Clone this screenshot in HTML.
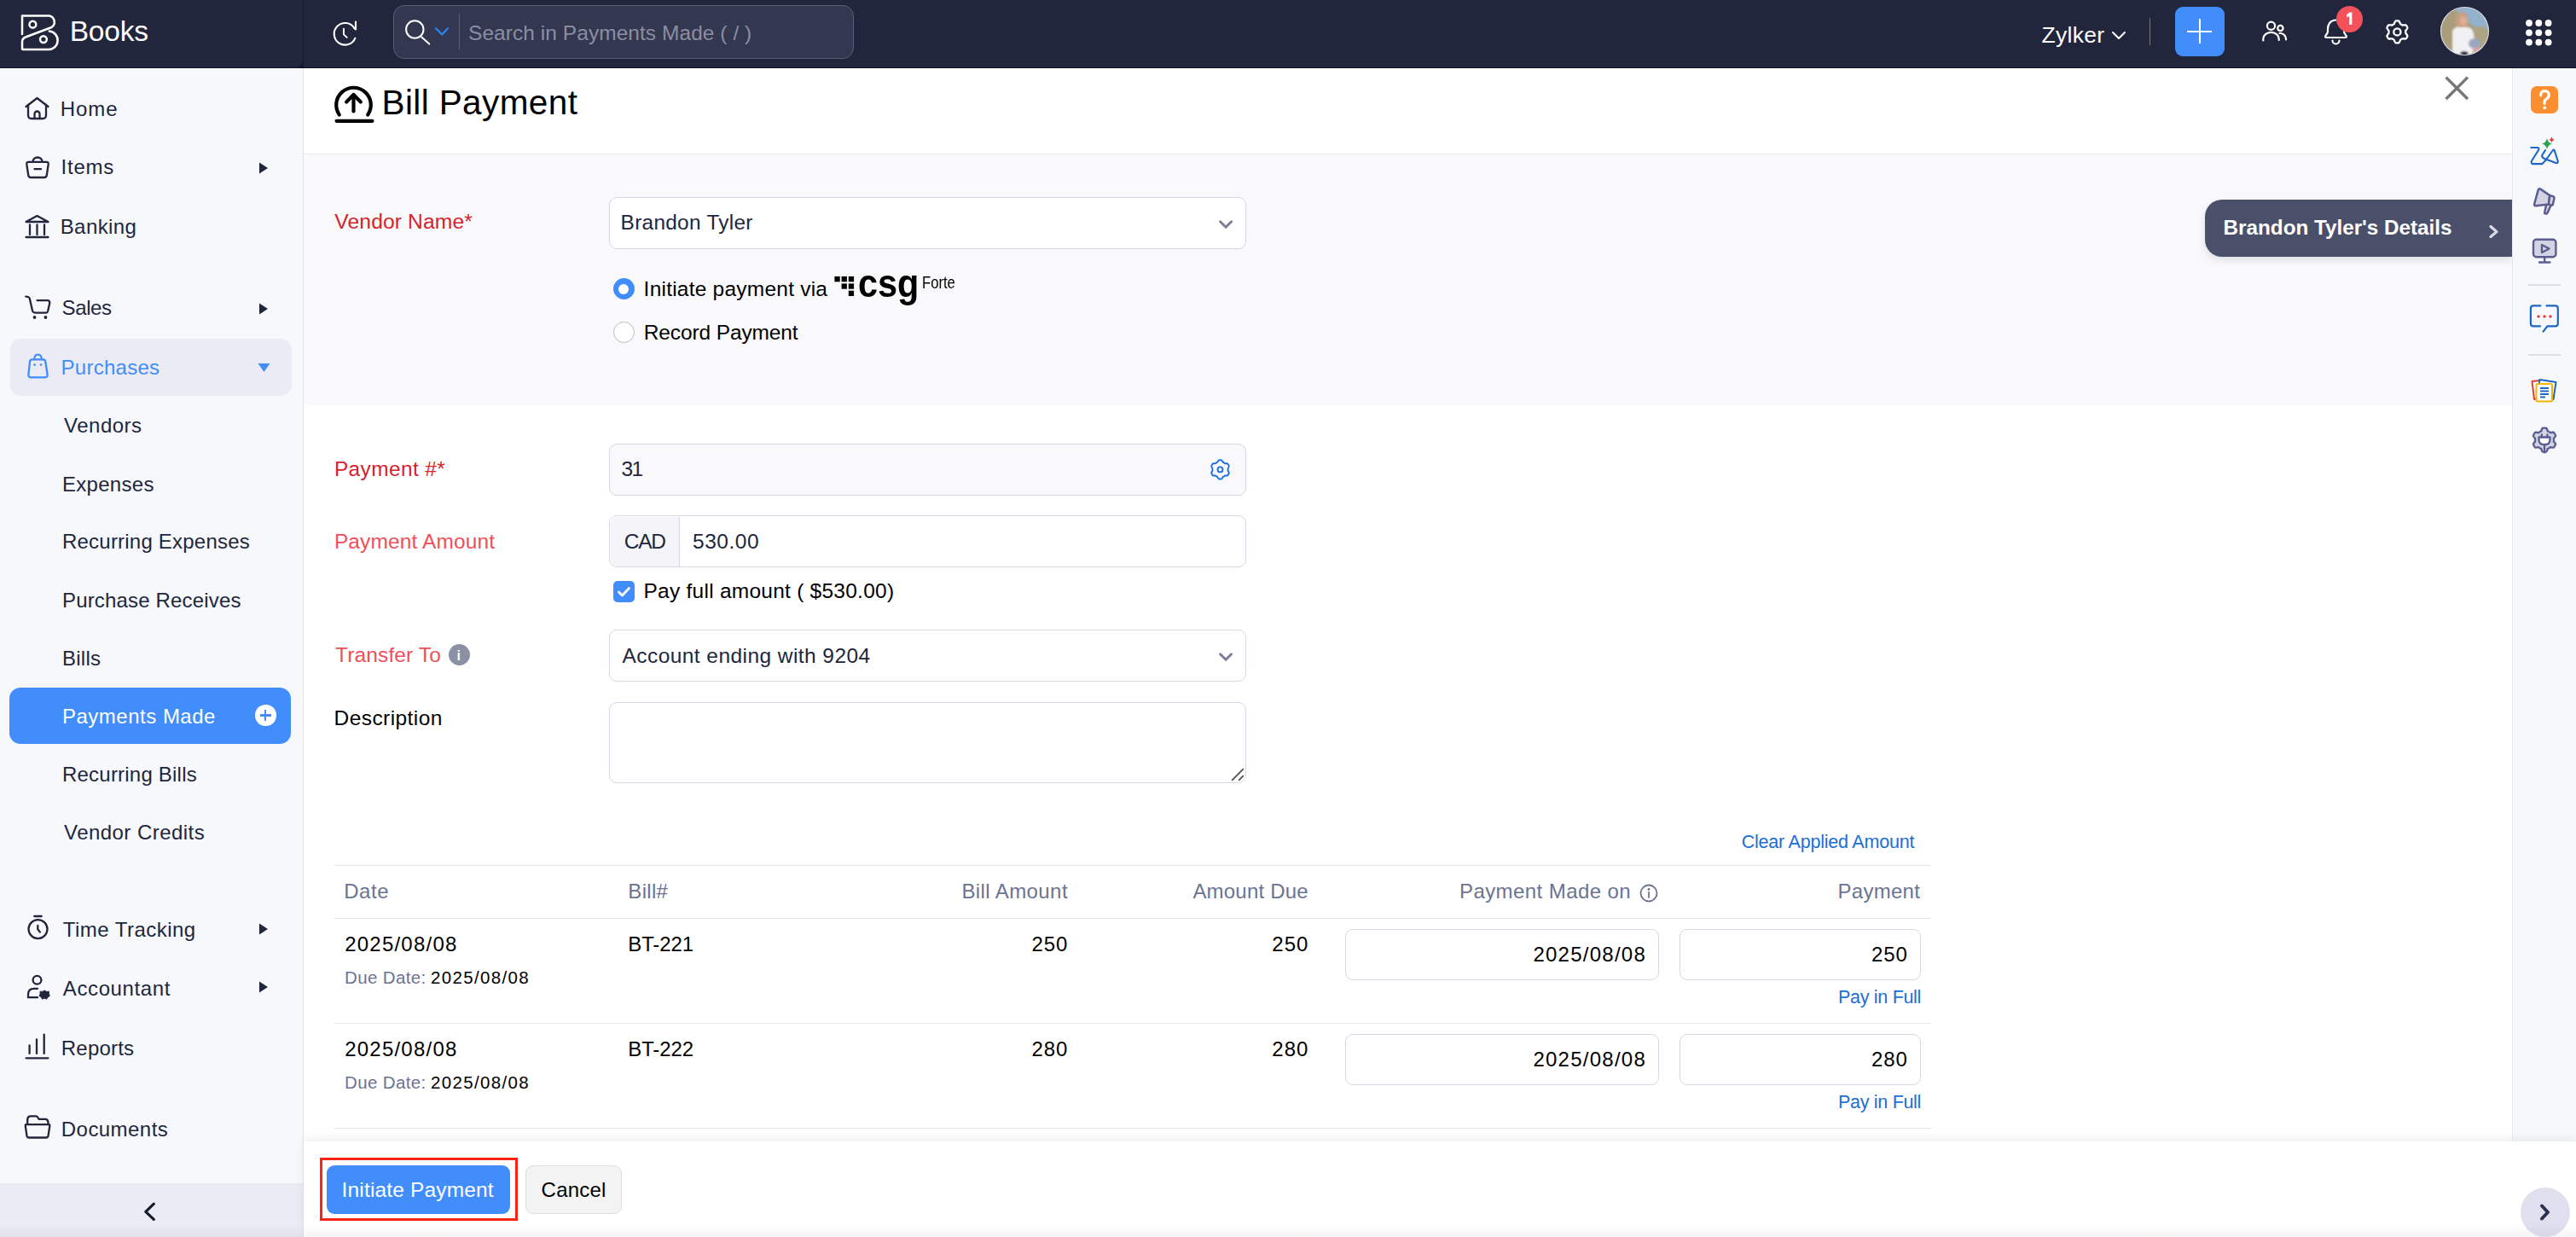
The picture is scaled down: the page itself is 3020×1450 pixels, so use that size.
<!DOCTYPE html>
<html><head><meta charset="utf-8"><title>Bill Payment</title>
<style>
html,body{margin:0;padding:0;}
body{width:3020px;height:1450px;position:relative;overflow:hidden;background:#fff;font-family:"Liberation Sans", sans-serif;}
.t{position:absolute;white-space:nowrap;line-height:1;}
svg{overflow:visible;}
</style></head><body>
<div style="position:absolute;left:0px;top:0px;width:3020px;height:80px;background:#21263c;"></div>
<div style="position:absolute;left:338px;top:0px;width:18px;height:80px;background:#171a2b;"></div>
<div style="position:absolute;left:0px;top:0px;width:354.5px;height:80px;background:#21263c;border-bottom-right-radius:10px;"></div>
<div style="position:absolute;left:0px;top:79px;width:3020px;height:1px;background:#0d1124;"></div>
<svg style="position:absolute;left:20px;top:12px;" width="52" height="52" viewBox="0 0 52 52" fill="none"><g stroke="#fff" stroke-width="2.5" stroke-linecap="round" stroke-linejoin="round"><path d="M6 28 V6.5 H38 A7.5 7.5 0 0 1 40.5 20 L10 31.5 Q6 33 6 37 V45.5 Q6 46 7 46 H36 A10.5 10.5 0 0 0 37.8 24.6"/><circle cx="18.4" cy="16.7" r="3.9"/><circle cx="30.9" cy="34.1" r="3.9"/></g></svg>
<div class="t" style="left:81.70px;top:20.00px;font-size:33.5px;color:#fff;font-weight:400;letter-spacing:-0.175px;">Books</div>
<svg style="position:absolute;left:388px;top:23px;" width="34" height="34" viewBox="0 0 34 34" fill="none"><g stroke="#fff" stroke-width="2.1" stroke-linecap="round" stroke-linejoin="round"><path d="M27.4 10 A12.8 12.8 0 1 0 28.3 21.8"/><path d="M29 2.5 V11.5 L27.4 10"/><path d="M15 10.6 V17.4 L18.7 20.9" stroke-width="1.9"/></g></svg>
<div style="position:absolute;left:461px;top:6px;width:540px;height:63px;background:#33374f;border:1px solid #5a5e78;border-radius:13px;box-sizing:border-box;"></div>
<svg style="position:absolute;left:472px;top:20px;" width="34" height="34" viewBox="0 0 34 34" fill="none"><g stroke="#fff" stroke-width="2" stroke-linecap="round"><circle cx="14.3" cy="14.5" r="10.2"/><path d="M22.3 23.5 L31.3 31.6"/></g></svg>
<svg style="position:absolute;left:508px;top:29px;" width="20" height="14" viewBox="0 0 20 14" fill="none"><path d="M3 4.3 L10.2 11.4 L17 4.3" stroke="#2f80f0" stroke-width="2.3" stroke-linecap="round" stroke-linejoin="round"/></svg>
<div style="position:absolute;left:538px;top:16px;width:1.2000000000000455px;height:42px;background:#5d6178;"></div>
<div class="t" style="left:549.00px;top:27.00px;font-size:24.5px;color:#8a8ea3;font-weight:400;letter-spacing:0.050px;">Search in Payments Made ( / )</div>
<div class="t" style="left:2393.60px;top:28.00px;font-size:26.5px;color:#fff;font-weight:400;letter-spacing:0.280px;">Zylker</div>
<svg style="position:absolute;left:2474px;top:34px;" width="20" height="14" viewBox="0 0 20 14" fill="none"><path d="M3 4 L10 11 L17 4" stroke="#fff" stroke-width="2" stroke-linecap="round" stroke-linejoin="round"/></svg>
<div style="position:absolute;left:2519.5px;top:21px;width:1.199999999999818px;height:32px;background:#77777a;"></div>
<div style="position:absolute;left:2550px;top:8px;width:58px;height:58px;background:#408dfb;border-radius:9px;"></div>
<div style="position:absolute;left:2564px;top:35.5px;width:29px;height:2.0px;background:#fff;"></div>
<div style="position:absolute;left:2577.5px;top:22px;width:2.0px;height:29px;background:#fff;"></div>
<svg style="position:absolute;left:2650px;top:22px;" width="34" height="30" viewBox="0 0 34 30" fill="none"><g stroke="#fff" stroke-width="2.2" stroke-linecap="round"><circle cx="12.5" cy="8.3" r="4.6"/><circle cx="23.4" cy="11" r="3.2"/><path d="M3.3 25.5 V23.5 A9 7.5 0 0 1 21.7 23.5 V25"/><path d="M22.5 17 A7 7 0 0 1 30 23.5 V24.5"/></g></svg>
<svg style="position:absolute;left:2722px;top:20px;" width="34" height="34" viewBox="0 0 34 34" fill="none"><g stroke="#fff" stroke-width="2.2" stroke-linecap="round" stroke-linejoin="round"><path d="M16.5 3.5 C10 3.5 7 8.5 7 14 V17 C7 19.5 4 21.5 4 23 C4 23.8 4.6 24 5.5 24 H27.5 C28.4 24 29 23.8 29 23 C29 21.5 26 19.5 26 17"/><path d="M12.5 27.5 A4 4 0 0 0 20.5 27.5"/></g></svg>
<div style="position:absolute;left:2739px;top:7px;width:31px;height:31px;border-radius:50%;background:#f5515b;"></div>
<svg style="position:absolute;left:2740px;top:10px;" width="30" height="30" viewBox="0 0 30 30" fill="none"><path d="M14.3 4.6 H17.4 V18.9 H14.3 V8.9 L11.1 10.4 V7.3 Z" fill="#fff"/></svg>
<svg style="position:absolute;left:2794px;top:21px;" width="34" height="34" viewBox="0 0 34 34" fill="none"><g stroke="#fff" stroke-width="2.3" stroke-linejoin="round"><path d="M26.30 16.40 L26.30 16.57 L26.29 16.75 L26.29 16.92 L26.28 17.09 L26.26 17.26 L26.25 17.43 L26.23 17.61 L26.30 17.79 L26.45 17.99 L26.61 18.20 L26.77 18.42 L26.94 18.64 L27.12 18.87 L27.29 19.12 L27.46 19.36 L27.62 19.62 L27.78 19.88 L27.93 20.15 L28.06 20.42 L28.18 20.69 L28.28 20.96 L28.36 21.23 L28.37 21.48 L28.28 21.69 L28.18 21.89 L28.08 22.10 L27.98 22.30 L27.88 22.50 L27.77 22.70 L27.66 22.90 L27.54 23.10 L27.42 23.29 L27.30 23.48 L27.18 23.67 L27.05 23.86 L26.92 24.04 L26.78 24.22 L26.57 24.34 L26.29 24.41 L26.00 24.46 L25.71 24.49 L25.41 24.51 L25.10 24.52 L24.80 24.51 L24.50 24.50 L24.20 24.47 L23.90 24.44 L23.61 24.41 L23.33 24.38 L23.06 24.34 L22.80 24.31 L22.56 24.28 L22.36 24.31 L22.22 24.41 L22.08 24.51 L21.94 24.61 L21.79 24.70 L21.65 24.80 L21.50 24.89 L21.35 24.97 L21.20 25.06 L21.05 25.14 L20.89 25.22 L20.74 25.30 L20.58 25.37 L20.43 25.44 L20.27 25.51 L20.15 25.67 L20.05 25.90 L19.95 26.14 L19.84 26.39 L19.73 26.65 L19.62 26.92 L19.49 27.19 L19.36 27.46 L19.22 27.73 L19.08 28.00 L18.92 28.26 L18.75 28.51 L18.58 28.74 L18.39 28.97 L18.20 29.18 L17.98 29.30 L17.76 29.33 L17.53 29.35 L17.31 29.37 L17.08 29.38 L16.85 29.39 L16.63 29.40 L16.40 29.40 L16.17 29.40 L15.95 29.39 L15.72 29.38 L15.49 29.37 L15.27 29.35 L15.04 29.33 L14.82 29.30 L14.60 29.18 L14.41 28.97 L14.22 28.74 L14.05 28.51 L13.88 28.26 L13.72 28.00 L13.58 27.73 L13.44 27.46 L13.31 27.19 L13.18 26.92 L13.07 26.65 L12.96 26.39 L12.85 26.14 L12.75 25.90 L12.65 25.67 L12.53 25.51 L12.37 25.44 L12.22 25.37 L12.06 25.30 L11.91 25.22 L11.75 25.14 L11.60 25.06 L11.45 24.97 L11.30 24.89 L11.15 24.80 L11.01 24.70 L10.86 24.61 L10.72 24.51 L10.58 24.41 L10.44 24.31 L10.24 24.28 L10.00 24.31 L9.74 24.34 L9.47 24.38 L9.19 24.41 L8.90 24.44 L8.60 24.47 L8.30 24.50 L8.00 24.51 L7.70 24.52 L7.39 24.51 L7.09 24.49 L6.80 24.46 L6.51 24.41 L6.23 24.34 L6.02 24.22 L5.88 24.04 L5.75 23.86 L5.62 23.67 L5.50 23.48 L5.38 23.29 L5.26 23.10 L5.14 22.90 L5.03 22.70 L4.92 22.50 L4.82 22.30 L4.72 22.10 L4.62 21.89 L4.52 21.69 L4.43 21.48 L4.44 21.23 L4.52 20.96 L4.62 20.69 L4.74 20.42 L4.87 20.15 L5.02 19.88 L5.18 19.62 L5.34 19.36 L5.51 19.12 L5.68 18.87 L5.86 18.64 L6.03 18.42 L6.19 18.20 L6.35 17.99 L6.50 17.79 L6.57 17.61 L6.55 17.43 L6.54 17.26 L6.52 17.09 L6.51 16.92 L6.51 16.75 L6.50 16.57 L6.50 16.40 L6.50 16.23 L6.51 16.05 L6.51 15.88 L6.52 15.71 L6.54 15.54 L6.55 15.37 L6.57 15.19 L6.50 15.01 L6.35 14.81 L6.19 14.60 L6.03 14.38 L5.86 14.16 L5.68 13.93 L5.51 13.68 L5.34 13.44 L5.18 13.18 L5.02 12.92 L4.87 12.65 L4.74 12.38 L4.62 12.11 L4.52 11.84 L4.44 11.57 L4.43 11.32 L4.52 11.11 L4.62 10.91 L4.72 10.70 L4.82 10.50 L4.92 10.30 L5.03 10.10 L5.14 9.90 L5.26 9.70 L5.38 9.51 L5.50 9.32 L5.62 9.13 L5.75 8.94 L5.88 8.76 L6.02 8.58 L6.23 8.46 L6.51 8.39 L6.80 8.34 L7.09 8.31 L7.39 8.29 L7.70 8.28 L8.00 8.29 L8.30 8.30 L8.60 8.33 L8.90 8.36 L9.19 8.39 L9.47 8.42 L9.74 8.46 L10.00 8.49 L10.24 8.52 L10.44 8.49 L10.58 8.39 L10.72 8.29 L10.86 8.19 L11.01 8.10 L11.15 8.00 L11.30 7.91 L11.45 7.83 L11.60 7.74 L11.75 7.66 L11.91 7.58 L12.06 7.50 L12.22 7.43 L12.37 7.36 L12.53 7.29 L12.65 7.13 L12.75 6.90 L12.85 6.66 L12.96 6.41 L13.07 6.15 L13.18 5.88 L13.31 5.61 L13.44 5.34 L13.58 5.07 L13.72 4.80 L13.88 4.54 L14.05 4.29 L14.22 4.06 L14.41 3.83 L14.60 3.62 L14.82 3.50 L15.04 3.47 L15.27 3.45 L15.49 3.43 L15.72 3.42 L15.95 3.41 L16.17 3.40 L16.40 3.40 L16.63 3.40 L16.85 3.41 L17.08 3.42 L17.31 3.43 L17.53 3.45 L17.76 3.47 L17.98 3.50 L18.20 3.62 L18.39 3.83 L18.58 4.06 L18.75 4.29 L18.92 4.54 L19.08 4.80 L19.22 5.07 L19.36 5.34 L19.49 5.61 L19.62 5.88 L19.73 6.15 L19.84 6.41 L19.95 6.66 L20.05 6.90 L20.15 7.13 L20.27 7.29 L20.43 7.36 L20.58 7.43 L20.74 7.50 L20.89 7.58 L21.05 7.66 L21.20 7.74 L21.35 7.83 L21.50 7.91 L21.65 8.00 L21.79 8.10 L21.94 8.19 L22.08 8.29 L22.22 8.39 L22.36 8.49 L22.56 8.52 L22.80 8.49 L23.06 8.46 L23.33 8.42 L23.61 8.39 L23.90 8.36 L24.20 8.33 L24.50 8.30 L24.80 8.29 L25.10 8.28 L25.41 8.29 L25.71 8.31 L26.00 8.34 L26.29 8.39 L26.57 8.46 L26.78 8.58 L26.92 8.76 L27.05 8.94 L27.18 9.13 L27.30 9.32 L27.42 9.51 L27.54 9.70 L27.66 9.90 L27.77 10.10 L27.88 10.30 L27.98 10.50 L28.08 10.70 L28.18 10.91 L28.28 11.11 L28.37 11.32 L28.36 11.57 L28.28 11.84 L28.18 12.11 L28.06 12.38 L27.93 12.65 L27.78 12.92 L27.62 13.18 L27.46 13.44 L27.29 13.68 L27.12 13.93 L26.94 14.16 L26.77 14.38 L26.61 14.60 L26.45 14.81 L26.30 15.01 L26.23 15.19 L26.25 15.37 L26.26 15.54 L26.28 15.71 L26.29 15.88 L26.29 16.05 L26.30 16.23 Z"/><circle cx="16.4" cy="16.4" r="4.1"/></g></svg>
<svg style="position:absolute;left:2861px;top:8px;" width="57" height="57" viewBox="0 0 57 57" fill="none"><defs><clipPath id="avc"><circle cx="28.5" cy="28.5" r="28"/></clipPath><filter id="avb"><feGaussianBlur stdDeviation="1.3"/></filter></defs><g clip-path="url(#avc)"><rect width="57" height="57" fill="#a99d7c"/><g filter="url(#avb)"><path d="M16 0 H57 V30 Q50 22 40 24 Q33 18 22 10 Z" fill="#93b2cb"/><path d="M40 24 Q50 20 57 28 V57 H40 Z" fill="#aea383"/><ellipse cx="25.5" cy="18" rx="7.5" ry="12" fill="#c99f80"/><ellipse cx="27" cy="16.5" rx="4.2" ry="5" fill="#dcae98"/><path d="M14 28 Q18 22 24 24 L32 24 Q38 24 39 32 L41 44 Q41 54 34 57 H14 Z" fill="#f1f0f3"/><ellipse cx="40" cy="43" rx="7" ry="6" fill="#9aa7c2"/><ellipse cx="43" cy="51" rx="5.5" ry="3.5" fill="#d9a4a0"/><ellipse cx="28" cy="55" rx="5" ry="3" fill="#2b2b2b"/></g></g><circle cx="28.5" cy="28.5" r="28" stroke="#d8d8e0" stroke-width="1.2" fill="none"/></svg>
<svg style="position:absolute;left:2961px;top:23px;" width="30" height="30" viewBox="0 0 30 30" fill="none"><circle cx="4.0" cy="4.0" r="3.9" fill="#fff"/><circle cx="15.3" cy="4.0" r="3.9" fill="#fff"/><circle cx="26.6" cy="4.0" r="3.9" fill="#fff"/><circle cx="4.0" cy="15.3" r="3.9" fill="#fff"/><circle cx="15.3" cy="15.3" r="3.9" fill="#fff"/><circle cx="26.6" cy="15.3" r="3.9" fill="#fff"/><circle cx="4.0" cy="26.6" r="3.9" fill="#fff"/><circle cx="15.3" cy="26.6" r="3.9" fill="#fff"/><circle cx="26.6" cy="26.6" r="3.9" fill="#fff"/></svg>
<div style="position:absolute;left:0px;top:80px;width:355px;height:1370px;background:#f7f8fc;"></div>
<div style="position:absolute;left:0px;top:80px;width:356px;height:1px;background:#ffffff;"></div>
<div style="position:absolute;left:355px;top:80px;width:1px;height:1370px;background:#e3e4ea;"></div>
<div style="position:absolute;left:12px;top:397px;width:330px;height:67px;background:#ebebf5;border-radius:13px;"></div>
<div style="position:absolute;left:11px;top:806px;width:330px;height:66px;background:#408dfb;border-radius:13px;"></div>
<div class="t" style="left:70.70px;top:116.00px;font-size:24px;color:#21263c;font-weight:400;letter-spacing:0.967px;">Home</div>
<div class="t" style="left:71.60px;top:184.00px;font-size:24px;color:#21263c;font-weight:400;letter-spacing:0.750px;">Items</div>
<div class="t" style="left:70.70px;top:254.00px;font-size:24px;color:#21263c;font-weight:400;letter-spacing:0.417px;">Banking</div>
<div class="t" style="left:72.60px;top:349.00px;font-size:24px;color:#21263c;font-weight:400;letter-spacing:-0.400px;">Sales</div>
<div class="t" style="left:71.60px;top:419.00px;font-size:24px;color:#408dfb;font-weight:400;letter-spacing:0.262px;">Purchases</div>
<div class="t" style="left:75.00px;top:487.00px;font-size:24px;color:#21263c;font-weight:400;letter-spacing:0.500px;">Vendors</div>
<div class="t" style="left:73.00px;top:556.00px;font-size:24px;color:#21263c;font-weight:400;letter-spacing:0.286px;">Expenses</div>
<div class="t" style="left:73.00px;top:623.00px;font-size:24px;color:#21263c;font-weight:400;letter-spacing:0.212px;">Recurring Expenses</div>
<div class="t" style="left:73.00px;top:692.00px;font-size:24px;color:#21263c;font-weight:400;letter-spacing:0.169px;">Purchase Receives</div>
<div class="t" style="left:73.00px;top:760.00px;font-size:24px;color:#21263c;font-weight:400;letter-spacing:0.250px;">Bills</div>
<div class="t" style="left:73.00px;top:828.00px;font-size:24px;color:#fff;font-weight:400;letter-spacing:0.500px;">Payments Made</div>
<div class="t" style="left:73.00px;top:896.00px;font-size:24px;color:#21263c;font-weight:400;letter-spacing:0.214px;">Recurring Bills</div>
<div class="t" style="left:75.00px;top:964.00px;font-size:24px;color:#21263c;font-weight:400;letter-spacing:0.454px;">Vendor Credits</div>
<div class="t" style="left:73.80px;top:1078.00px;font-size:24px;color:#21263c;font-weight:400;letter-spacing:0.467px;">Time Tracking</div>
<div class="t" style="left:73.80px;top:1147.00px;font-size:24px;color:#21263c;font-weight:400;letter-spacing:0.611px;">Accountant</div>
<div class="t" style="left:71.80px;top:1217.00px;font-size:24px;color:#21263c;font-weight:400;letter-spacing:0.200px;">Reports</div>
<div class="t" style="left:71.80px;top:1312.00px;font-size:24px;color:#21263c;font-weight:400;letter-spacing:0.450px;">Documents</div>
<svg style="position:absolute;left:303px;top:190.2px;" width="12" height="14" viewBox="0 0 12 14" fill="none"><path d="M1 0.5 L11 7 L1 13.5 Z" fill="#21263c"/></svg>
<svg style="position:absolute;left:303px;top:355px;" width="12" height="14" viewBox="0 0 12 14" fill="none"><path d="M1 0.5 L11 7 L1 13.5 Z" fill="#21263c"/></svg>
<svg style="position:absolute;left:303px;top:1082px;" width="12" height="14" viewBox="0 0 12 14" fill="none"><path d="M1 0.5 L11 7 L1 13.5 Z" fill="#21263c"/></svg>
<svg style="position:absolute;left:303px;top:1150.3px;" width="12" height="14" viewBox="0 0 12 14" fill="none"><path d="M1 0.5 L11 7 L1 13.5 Z" fill="#21263c"/></svg>
<svg style="position:absolute;left:302px;top:425px;" width="15" height="12" viewBox="0 0 15 12" fill="none"><path d="M0.5 1 H14.5 L7.5 11 Z" fill="#408dfb"/></svg>
<div style="position:absolute;left:299px;top:826px;width:24.5px;height:24.5px;border-radius:50%;background:#fff;"></div>
<div style="position:absolute;left:304.8px;top:837.4px;width:13.0px;height:2.2000000000000455px;background:#408dfb;"></div>
<div style="position:absolute;left:310.2px;top:832px;width:2.1999999999999886px;height:13px;background:#408dfb;"></div>
<svg style="position:absolute;left:28px;top:112px;" width="32" height="30" viewBox="0 0 32 30" fill="none"><g stroke="#21263c" stroke-width="2.3" stroke-linecap="round" stroke-linejoin="round"><path d="M2.5 13 L15.5 3 L28.5 13"/><path d="M5 11 V23 Q5 27 9 27 H22 Q26 27 26 23 V11"/><path d="M12.5 27 V21.5 A3 3 0 0 1 18.5 21.5 V27"/></g></svg>
<svg style="position:absolute;left:28px;top:180px;" width="32" height="30" viewBox="0 0 32 30" fill="none"><g stroke="#21263c" stroke-width="2.3" stroke-linecap="round" stroke-linejoin="round"><path d="M10.5 9.5 A5.5 5 0 0 1 21.5 9.5"/><path d="M5.5 9.8 H26.5 Q29 9.8 28.7 12.5 L26.8 25.5 Q26.4 28 23.8 28 H8.2 Q5.6 28 5.2 25.5 L3.3 12.5 Q3 9.8 5.5 9.8 Z"/><path d="M12.5 18.2 H20"/></g></svg>
<svg style="position:absolute;left:28px;top:250px;" width="32" height="30" viewBox="0 0 32 30" fill="none"><g stroke="#21263c" stroke-width="2.3" stroke-linecap="round" stroke-linejoin="round"><path d="M2.5 10 L15.5 3 L28.5 10 Z"/><path d="M7 13.5 V25 M15.5 13.5 V25 M24 13.5 V25"/><path d="M2.5 28 H28.5"/></g></svg>
<svg style="position:absolute;left:28px;top:345px;" width="34" height="32" viewBox="0 0 34 32" fill="none"><g stroke="#21263c" stroke-width="2.3" stroke-linecap="round" stroke-linejoin="round"><path d="M2.2 2.6 Q5.5 2.6 6.7 4.5 L10.2 19.9 Q11 21.7 13.4 21.7 H25.8 Q27.5 21.7 28 20 L30.2 10.5 Q30.5 7.5 28 7.2 H15.6"/></g><circle cx="12.5" cy="27" r="1.9" fill="#21263c"/><circle cx="25.4" cy="27" r="1.9" fill="#21263c"/></svg>
<svg style="position:absolute;left:30px;top:414px;" width="30" height="32" viewBox="0 0 30 32" fill="none"><g stroke="#408dfb" stroke-width="2.3" stroke-linecap="round" stroke-linejoin="round"><path d="M10 7.3 Q10.5 1.6 14.5 1.6 Q18.5 1.6 19 7.3"/><path d="M7.5 7.4 H20.5 Q23 7.4 23.3 10 L25.6 25 Q26 28.3 22.7 28.3 H6.3 Q3 28.3 3.4 25 L5 10 Q5.3 7.4 7.5 7.4 Z"/></g><circle cx="10.6" cy="13.6" r="1.3" fill="#408dfb"/><circle cx="18" cy="13.6" r="1.3" fill="#408dfb"/></svg>
<svg style="position:absolute;left:29px;top:1070px;" width="32" height="34" viewBox="0 0 32 34" fill="none"><g stroke="#21263c" stroke-width="2.3" stroke-linecap="round" stroke-linejoin="round"><circle cx="15.5" cy="19.1" r="11"/><path d="M11.2 4 H19.7"/><path d="M15.3 14.9 V19.3 L17.9 22.6"/></g></svg>
<svg style="position:absolute;left:29px;top:1140px;" width="32" height="34" viewBox="0 0 32 34" fill="none"><g stroke="#21263c" stroke-width="2.3" stroke-linecap="round" stroke-linejoin="round"><circle cx="14.5" cy="8.7" r="4.9"/><path d="M15 18.8 H11 Q4 18.8 4 25.5 V29.2 H15"/></g><path d="M23.2 21 L25.6 22.4 L28.4 22.2 L28.2 25 L29.4 27.4 L27 28.8 L25.6 31.2 L23.2 30 L20.6 31.2 L19.4 28.8 L17 27.4 L18.2 25 L18 22.2 L20.8 22.4 Z" fill="#21263c" stroke="#21263c" stroke-width="1" stroke-linejoin="round"/></svg>
<svg style="position:absolute;left:29px;top:1210px;" width="32" height="34" viewBox="0 0 32 34" fill="none"><g stroke="#21263c" stroke-width="2.3" stroke-linecap="round" stroke-linejoin="round"><path d="M5.6 24.9 V15.5 M14 24.9 V8.5 M22.7 24.9 V2.6"/><path d="M1.6 30.3 H27.4"/></g></svg>
<svg style="position:absolute;left:28px;top:1303px;" width="32" height="34" viewBox="0 0 32 34" fill="none"><g stroke="#21263c" stroke-width="2.3" stroke-linecap="round" stroke-linejoin="round"><path d="M4.2 15 V9 Q4.5 5.4 8 5.4 H14 Q15.5 5.4 16.5 7 L17.5 8.8 H25 Q28 8.8 28.4 12 V15"/><path d="M2.5 15.2 H29.6 Q30.6 15.2 30.3 17 L28.5 28.5 Q28 30.5 26 30.5 H6 Q4 30.5 3.5 28.5 L1.8 17 Q1.5 15.2 2.5 15.2 Z"/></g></svg>
<div style="position:absolute;left:0px;top:1387px;width:355px;height:63px;background:#ebebf4;"></div>
<svg style="position:absolute;left:164px;top:1405px;" width="22" height="30" viewBox="0 0 22 30" fill="none"><path d="M16.3 6.2 L6.8 15.3 L16.3 24.4" stroke="#161a2e" stroke-width="3.2" stroke-linecap="round" stroke-linejoin="round"/></svg>
<div style="position:absolute;left:356px;top:81px;width:2589px;height:99px;background:#fff;"></div>
<div style="position:absolute;left:356px;top:180px;width:2589px;height:1px;background:#ebebef;"></div>
<div style="position:absolute;left:356px;top:181px;width:2589px;height:294px;background:#f9f9fb;"></div>
<svg style="position:absolute;left:390px;top:97px;" width="50" height="50" viewBox="0 0 50 50" fill="none"><g stroke="#000" stroke-width="4.2" stroke-linecap="round" stroke-linejoin="round"><path d="M7.8 37.6 A20.3 20.3 0 1 1 41.2 37.6"/><path d="M24.5 33.5 V14.2"/><path d="M16.2 22.4 L24.5 14 L32.8 22.4"/><path d="M4.6 44.8 H46.4"/></g></svg>
<div class="t" style="left:447.50px;top:100.00px;font-size:40.5px;color:#000;font-weight:400;letter-spacing:0.391px;">Bill Payment</div>
<svg style="position:absolute;left:2862px;top:85px;" width="38" height="38" viewBox="0 0 38 38" fill="none"><g stroke="#767676" stroke-width="3.4" stroke-linecap="butt"><path d="M5.6 5.6 L31 31 M31 5.6 L5.6 31"/></g></svg>
<div style="position:absolute;left:2585px;top:234px;width:360px;height:67px;background:#4b506a;border-radius:20px 0 0 20px;box-shadow:0 4px 9px rgba(0,0,0,0.10);"></div>
<div class="t" style="left:2606.60px;top:255.00px;font-size:24.3px;color:#fff;font-weight:700;letter-spacing:-0.032px;">Brandon Tyler's Details</div>
<svg style="position:absolute;left:2913px;top:260px;" width="22" height="22" viewBox="0 0 22 22" fill="none"><path d="M7 5.5 L14 11.6 L7 17.5" stroke="#dcdde6" stroke-width="3.2" stroke-linecap="round" stroke-linejoin="round"/></svg>
<div class="t" style="left:392.30px;top:248.00px;font-size:24.7px;color:#d5232d;font-weight:400;letter-spacing:0.091px;">Vendor Name*</div>
<div style="position:absolute;left:714px;top:231px;width:747px;height:61px;background:#fff;border:1.5px solid #d6d8e3;border-radius:9px;box-sizing:border-box;"></div>
<div class="t" style="left:727.60px;top:249.00px;font-size:24.4px;color:#21263c;font-weight:400;letter-spacing:0.283px;">Brandon Tyler</div>
<svg style="position:absolute;left:1428px;top:254px;" width="18" height="16" viewBox="0 0 18 16" fill="none"><path d="M2.6 5.8 L9.1 12.3 L15.6 5.8" stroke="#7b7e95" stroke-width="3" stroke-linecap="round" stroke-linejoin="round"/></svg>
<div style="position:absolute;left:718.5px;top:326px;width:25px;height:25px;border-radius:50%;background:#408dfb;"></div>
<div style="position:absolute;left:725.4px;top:332.5px;width:12px;height:12px;border-radius:50%;background:#fff;"></div>
<div class="t" style="left:754.60px;top:327.00px;font-size:24.5px;color:#000;font-weight:400;letter-spacing:0.226px;">Initiate payment via</div>
<div style="position:absolute;left:718.5px;top:376.8px;width:25px;height:25px;border-radius:50%;background:#fff;border:1.2px solid #bdbdc2;box-sizing:border-box;"></div>
<div class="t" style="left:754.70px;top:378.00px;font-size:24.5px;color:#000;font-weight:400;letter-spacing:-0.115px;">Record Payment</div>
<svg style="position:absolute;left:975px;top:320px;" width="30" height="30" viewBox="0 0 30 30" fill="none"><rect x="3.4" y="4.0" width="6.3" height="6.3" fill="#000"/><rect x="11.6" y="4.0" width="6.3" height="6.3" fill="#000"/><rect x="19.8" y="4.0" width="6.3" height="6.3" fill="#000"/><rect x="11.6" y="12.4" width="6.3" height="6.3" fill="#000"/><rect x="19.8" y="12.4" width="6.3" height="6.3" fill="#000"/><rect x="19.8" y="20.7" width="6.3" height="6.3" fill="#000"/></svg>
<div class="t" style="left:1006.40px;top:309.00px;font-size:46px;color:#000;font-weight:700;transform:scaleX(0.9);transform-origin:0 0;">csg</div>
<div class="t" style="left:1081.10px;top:321.00px;font-size:20.8px;color:#000;font-weight:400;transform:scaleX(0.8);transform-origin:0 0;">Forte</div>
<div class="t" style="left:391.90px;top:538.00px;font-size:24.5px;color:#d5232d;font-weight:400;letter-spacing:0.356px;">Payment #*</div>
<div style="position:absolute;left:714px;top:520px;width:747px;height:61px;background:#f9f9fb;border:1.5px solid #d6d8e3;border-radius:9px;box-sizing:border-box;"></div>
<div class="t" style="left:728.60px;top:538.00px;font-size:24.5px;color:#21263c;font-weight:400;letter-spacing:-1.600px;">31</div>
<svg style="position:absolute;left:1416px;top:536px;" width="30" height="30" viewBox="0 0 30 30" fill="none"><g stroke="#1a6fe0" stroke-width="1.9" stroke-linejoin="round"><path d="M23.60 14.40 L23.60 14.56 L23.59 14.72 L23.59 14.88 L23.58 15.03 L23.57 15.19 L23.55 15.35 L23.53 15.51 L23.51 15.67 L23.55 15.83 L23.66 16.01 L23.78 16.20 L23.90 16.40 L24.02 16.60 L24.14 16.80 L24.26 17.01 L24.37 17.23 L24.48 17.45 L24.58 17.67 L24.67 17.90 L24.74 18.13 L24.81 18.36 L24.79 18.56 L24.72 18.74 L24.64 18.91 L24.56 19.09 L24.48 19.27 L24.39 19.44 L24.30 19.61 L24.21 19.78 L24.11 19.95 L24.01 20.12 L23.91 20.28 L23.81 20.45 L23.70 20.61 L23.59 20.77 L23.48 20.92 L23.36 21.08 L23.25 21.23 L23.08 21.35 L22.85 21.41 L22.61 21.45 L22.37 21.49 L22.13 21.52 L21.89 21.53 L21.64 21.54 L21.40 21.55 L21.16 21.54 L20.93 21.54 L20.70 21.53 L20.48 21.52 L20.26 21.52 L20.10 21.57 L19.98 21.67 L19.85 21.76 L19.72 21.85 L19.59 21.94 L19.46 22.03 L19.32 22.12 L19.19 22.20 L19.05 22.28 L18.91 22.36 L18.77 22.43 L18.63 22.51 L18.49 22.58 L18.35 22.65 L18.20 22.71 L18.06 22.78 L17.91 22.84 L17.78 22.95 L17.68 23.14 L17.58 23.33 L17.47 23.54 L17.36 23.74 L17.24 23.95 L17.11 24.16 L16.98 24.36 L16.85 24.57 L16.70 24.76 L16.55 24.95 L16.39 25.13 L16.23 25.30 L16.04 25.39 L15.85 25.42 L15.66 25.44 L15.47 25.46 L15.27 25.47 L15.08 25.48 L14.89 25.49 L14.69 25.50 L14.50 25.50 L14.31 25.50 L14.11 25.49 L13.92 25.48 L13.73 25.47 L13.53 25.46 L13.34 25.44 L13.15 25.42 L12.96 25.39 L12.77 25.30 L12.61 25.13 L12.45 24.95 L12.30 24.76 L12.15 24.57 L12.02 24.36 L11.89 24.16 L11.76 23.95 L11.64 23.74 L11.53 23.54 L11.42 23.33 L11.32 23.14 L11.22 22.95 L11.09 22.84 L10.94 22.78 L10.80 22.71 L10.65 22.65 L10.51 22.58 L10.37 22.51 L10.23 22.43 L10.09 22.36 L9.95 22.28 L9.81 22.20 L9.68 22.12 L9.54 22.03 L9.41 21.94 L9.28 21.85 L9.15 21.76 L9.02 21.67 L8.90 21.57 L8.74 21.52 L8.52 21.52 L8.30 21.53 L8.07 21.54 L7.84 21.54 L7.60 21.55 L7.36 21.54 L7.11 21.53 L6.87 21.52 L6.63 21.49 L6.39 21.45 L6.15 21.41 L5.92 21.35 L5.75 21.23 L5.64 21.08 L5.52 20.92 L5.41 20.77 L5.30 20.61 L5.19 20.45 L5.09 20.28 L4.99 20.12 L4.89 19.95 L4.79 19.78 L4.70 19.61 L4.61 19.44 L4.52 19.27 L4.44 19.09 L4.36 18.91 L4.28 18.74 L4.21 18.56 L4.19 18.36 L4.26 18.13 L4.33 17.90 L4.42 17.67 L4.52 17.45 L4.63 17.23 L4.74 17.01 L4.86 16.80 L4.98 16.60 L5.10 16.40 L5.22 16.20 L5.34 16.01 L5.45 15.83 L5.49 15.67 L5.47 15.51 L5.45 15.35 L5.43 15.19 L5.42 15.03 L5.41 14.88 L5.41 14.72 L5.40 14.56 L5.40 14.40 L5.40 14.24 L5.41 14.08 L5.41 13.92 L5.42 13.77 L5.43 13.61 L5.45 13.45 L5.47 13.29 L5.49 13.13 L5.45 12.97 L5.34 12.79 L5.22 12.60 L5.10 12.40 L4.98 12.20 L4.86 12.00 L4.74 11.79 L4.63 11.57 L4.52 11.35 L4.42 11.13 L4.33 10.90 L4.26 10.67 L4.19 10.44 L4.21 10.24 L4.28 10.06 L4.36 9.89 L4.44 9.71 L4.52 9.53 L4.61 9.36 L4.70 9.19 L4.79 9.02 L4.89 8.85 L4.99 8.68 L5.09 8.52 L5.19 8.35 L5.30 8.19 L5.41 8.03 L5.52 7.88 L5.64 7.72 L5.75 7.57 L5.92 7.45 L6.15 7.39 L6.39 7.35 L6.63 7.31 L6.87 7.28 L7.11 7.27 L7.36 7.26 L7.60 7.25 L7.84 7.26 L8.07 7.26 L8.30 7.27 L8.52 7.28 L8.74 7.28 L8.90 7.23 L9.02 7.13 L9.15 7.04 L9.28 6.95 L9.41 6.86 L9.54 6.77 L9.68 6.68 L9.81 6.60 L9.95 6.52 L10.09 6.44 L10.23 6.37 L10.37 6.29 L10.51 6.22 L10.65 6.15 L10.80 6.09 L10.94 6.02 L11.09 5.96 L11.22 5.85 L11.32 5.66 L11.42 5.47 L11.53 5.26 L11.64 5.06 L11.76 4.85 L11.89 4.64 L12.02 4.44 L12.15 4.23 L12.30 4.04 L12.45 3.85 L12.61 3.67 L12.77 3.50 L12.96 3.41 L13.15 3.38 L13.34 3.36 L13.53 3.34 L13.73 3.33 L13.92 3.32 L14.11 3.31 L14.31 3.30 L14.50 3.30 L14.69 3.30 L14.89 3.31 L15.08 3.32 L15.27 3.33 L15.47 3.34 L15.66 3.36 L15.85 3.38 L16.04 3.41 L16.23 3.50 L16.39 3.67 L16.55 3.85 L16.70 4.04 L16.85 4.23 L16.98 4.44 L17.11 4.64 L17.24 4.85 L17.36 5.06 L17.47 5.26 L17.58 5.47 L17.68 5.66 L17.78 5.85 L17.91 5.96 L18.06 6.02 L18.20 6.09 L18.35 6.15 L18.49 6.22 L18.63 6.29 L18.77 6.37 L18.91 6.44 L19.05 6.52 L19.19 6.60 L19.32 6.68 L19.46 6.77 L19.59 6.86 L19.72 6.95 L19.85 7.04 L19.98 7.13 L20.10 7.23 L20.26 7.28 L20.48 7.28 L20.70 7.27 L20.93 7.26 L21.16 7.26 L21.40 7.25 L21.64 7.26 L21.89 7.27 L22.13 7.28 L22.37 7.31 L22.61 7.35 L22.85 7.39 L23.08 7.45 L23.25 7.57 L23.36 7.72 L23.48 7.88 L23.59 8.03 L23.70 8.19 L23.81 8.35 L23.91 8.52 L24.01 8.68 L24.11 8.85 L24.21 9.02 L24.30 9.19 L24.39 9.36 L24.48 9.53 L24.56 9.71 L24.64 9.89 L24.72 10.06 L24.79 10.24 L24.81 10.44 L24.74 10.67 L24.67 10.90 L24.58 11.13 L24.48 11.35 L24.37 11.57 L24.26 11.79 L24.14 12.00 L24.02 12.20 L23.90 12.40 L23.78 12.60 L23.66 12.79 L23.55 12.97 L23.51 13.13 L23.53 13.29 L23.55 13.45 L23.57 13.61 L23.58 13.77 L23.59 13.92 L23.59 14.08 L23.60 14.24 Z"/><circle cx="14.5" cy="14.4" r="3"/></g></svg>
<div class="t" style="left:391.90px;top:623.00px;font-size:24.5px;color:#ef4f5a;font-weight:400;letter-spacing:0.123px;">Payment Amount</div>
<div style="position:absolute;left:714px;top:604px;width:747px;height:61px;background:#fff;border:1.5px solid #d6d8e3;border-radius:9px;box-sizing:border-box;"></div>
<div style="position:absolute;left:715.5px;top:605.5px;width:80.5px;height:58.0px;background:#f5f5f9;border-radius:8px 0 0 8px;"></div>
<div style="position:absolute;left:796px;top:605.5px;width:1px;height:58.0px;background:#d6d8e3;"></div>
<div class="t" style="left:731.70px;top:623.00px;font-size:24.5px;color:#21263c;font-weight:400;letter-spacing:-1.200px;">CAD</div>
<div class="t" style="left:812.00px;top:623.00px;font-size:24.5px;color:#21263c;font-weight:400;letter-spacing:0.520px;">530.00</div>
<div style="position:absolute;left:718.5px;top:681px;width:25px;height:25px;border-radius:5px;background:#408dfb;"></div>
<svg style="position:absolute;left:718.5px;top:681px;" width="25" height="25" viewBox="0 0 25 25" fill="none"><path d="M6.5 13 L10.5 17 L18.5 8.5" stroke="#fff" stroke-width="2.8" stroke-linecap="round" stroke-linejoin="round"/></svg>
<div class="t" style="left:754.50px;top:681.00px;font-size:24.5px;color:#000;font-weight:400;letter-spacing:0.248px;">Pay full amount ( $530.00)</div>
<div class="t" style="left:393.10px;top:756.00px;font-size:24.5px;color:#ef4f5a;font-weight:400;letter-spacing:0.120px;">Transfer To</div>
<div style="position:absolute;left:526px;top:754.5px;width:25px;height:25px;border-radius:50%;background:#8a91a5;"></div>
<div class="t" style="left:535.50px;top:761.00px;font-size:16px;color:#fff;font-weight:700;">i</div>
<div style="position:absolute;left:714px;top:738px;width:747px;height:61px;background:#fff;border:1.5px solid #d6d8e3;border-radius:9px;box-sizing:border-box;"></div>
<div class="t" style="left:729.50px;top:757.00px;font-size:24.5px;color:#21263c;font-weight:400;letter-spacing:0.439px;">Account ending with 9204</div>
<svg style="position:absolute;left:1428px;top:761px;" width="18" height="16" viewBox="0 0 18 16" fill="none"><path d="M2.6 5.8 L9.1 12.3 L15.6 5.8" stroke="#7b7e95" stroke-width="3" stroke-linecap="round" stroke-linejoin="round"/></svg>
<div class="t" style="left:391.60px;top:830.00px;font-size:24.5px;color:#000;font-weight:400;letter-spacing:0.420px;">Description</div>
<div style="position:absolute;left:714px;top:823px;width:747px;height:95px;background:#fff;border:1.5px solid #d6d8e3;border-radius:9px;box-sizing:border-box;"></div>
<svg style="position:absolute;left:1440px;top:900px;" width="20" height="18" viewBox="0 0 20 18" fill="none"><path d="M4.2 14.9 L17.8 1.1 M12.2 14.9 L17.8 9.1" stroke="#555" stroke-width="1.9" stroke-linecap="butt"/></svg>
<div class="t" style="left:2041.70px;top:977.00px;font-size:21.5px;color:#1a6fd6;font-weight:400;letter-spacing:-0.216px;">Clear Applied Amount</div>
<div style="position:absolute;left:392px;top:1014px;width:1872px;height:1px;background:#e3e4ea;"></div>
<div class="t" style="left:403.20px;top:1033.00px;font-size:24px;color:#6b7393;font-weight:400;letter-spacing:0.533px;">Date</div>
<div class="t" style="left:736.30px;top:1033.00px;font-size:24px;color:#6b7393;font-weight:400;letter-spacing:0.325px;">Bill#</div>
<div class="t" style="left:1127.40px;top:1033.00px;font-size:24px;color:#6b7393;font-weight:400;letter-spacing:0.410px;">Bill Amount</div>
<div class="t" style="left:1398.40px;top:1033.00px;font-size:24px;color:#6b7393;font-weight:400;letter-spacing:0.211px;">Amount Due</div>
<div class="t" style="left:1711.00px;top:1033.00px;font-size:24px;color:#6b7393;font-weight:400;letter-spacing:0.421px;">Payment Made on</div>
<svg style="position:absolute;left:1921px;top:1035px;" width="24" height="24" viewBox="0 0 24 24" fill="none"><g stroke="#6b7393" stroke-width="1.8" stroke-linecap="round"><circle cx="12" cy="12" r="9.5"/><path d="M12 11 V17"/></g><circle cx="12" cy="7.5" r="1.4" fill="#6b7393"/></svg>
<div class="t" style="left:2154.50px;top:1033.00px;font-size:24px;color:#6b7393;font-weight:400;letter-spacing:0.267px;">Payment</div>
<div style="position:absolute;left:392px;top:1076px;width:1872px;height:1px;background:#e8e9ef;"></div>
<div class="t" style="left:404.20px;top:1095.00px;font-size:24px;color:#000;font-weight:400;letter-spacing:1.222px;">2025/08/08</div>
<div class="t" style="left:404.00px;top:1136.00px;font-size:20.5px;color:#6b7393;font-weight:400;letter-spacing:0.375px;">Due Date:</div>
<div class="t" style="left:505.00px;top:1136.00px;font-size:20.5px;color:#000;font-weight:400;letter-spacing:1.333px;">2025/08/08</div>
<div class="t" style="left:736.30px;top:1095.00px;font-size:24px;color:#000;font-weight:400;letter-spacing:-0.140px;">BT-221</div>
<div class="t" style="left:1209.50px;top:1095.00px;font-size:24px;color:#000;font-weight:400;letter-spacing:0.850px;">250</div>
<div class="t" style="left:1491.30px;top:1095.00px;font-size:24px;color:#000;font-weight:400;letter-spacing:1.000px;">250</div>
<div style="position:absolute;left:1577px;top:1088.5px;width:368px;height:60.0px;background:#fff;border:1.5px solid #d6d8e3;border-radius:9px;box-sizing:border-box;"></div>
<div class="t" style="left:1797.40px;top:1107.00px;font-size:24px;color:#000;font-weight:400;letter-spacing:1.256px;">2025/08/08</div>
<div style="position:absolute;left:1968.5px;top:1088.5px;width:283.0px;height:60.0px;background:#fff;border:1.5px solid #d6d8e3;border-radius:9px;box-sizing:border-box;"></div>
<div class="t" style="left:2194.00px;top:1107.00px;font-size:24px;color:#000;font-weight:400;letter-spacing:0.950px;">250</div>
<div class="t" style="left:2155.00px;top:1159.00px;font-size:21.5px;color:#1a6fd6;font-weight:400;letter-spacing:-0.300px;">Pay in Full</div>
<div style="position:absolute;left:392px;top:1199px;width:1872px;height:1px;background:#e8e9ef;"></div>
<div class="t" style="left:404.20px;top:1218.00px;font-size:24px;color:#000;font-weight:400;letter-spacing:1.222px;">2025/08/08</div>
<div class="t" style="left:404.00px;top:1259.00px;font-size:20.5px;color:#6b7393;font-weight:400;letter-spacing:0.375px;">Due Date:</div>
<div class="t" style="left:505.00px;top:1259.00px;font-size:20.5px;color:#000;font-weight:400;letter-spacing:1.333px;">2025/08/08</div>
<div class="t" style="left:736.30px;top:1218.00px;font-size:24px;color:#000;font-weight:400;letter-spacing:-0.140px;">BT-222</div>
<div class="t" style="left:1209.50px;top:1218.00px;font-size:24px;color:#000;font-weight:400;letter-spacing:0.850px;">280</div>
<div class="t" style="left:1491.30px;top:1218.00px;font-size:24px;color:#000;font-weight:400;letter-spacing:1.000px;">280</div>
<div style="position:absolute;left:1577px;top:1211.5px;width:368px;height:60.0px;background:#fff;border:1.5px solid #d6d8e3;border-radius:9px;box-sizing:border-box;"></div>
<div class="t" style="left:1797.40px;top:1230.00px;font-size:24px;color:#000;font-weight:400;letter-spacing:1.256px;">2025/08/08</div>
<div style="position:absolute;left:1968.5px;top:1211.5px;width:283.0px;height:60.0px;background:#fff;border:1.5px solid #d6d8e3;border-radius:9px;box-sizing:border-box;"></div>
<div class="t" style="left:2194.00px;top:1230.00px;font-size:24px;color:#000;font-weight:400;letter-spacing:0.950px;">280</div>
<div class="t" style="left:2155.00px;top:1282.00px;font-size:21.5px;color:#1a6fd6;font-weight:400;letter-spacing:-0.300px;">Pay in Full</div>
<div style="position:absolute;left:392px;top:1322px;width:1872px;height:1px;background:#e8e9ef;"></div>
<div style="position:absolute;left:2945px;top:80px;width:75px;height:1258px;background:#f7f8fc;"></div>
<div style="position:absolute;left:2945px;top:81px;width:1px;height:1257px;background:#e6e7ee;"></div>
<div style="position:absolute;left:2967px;top:101px;width:32px;height:32px;border-radius:7px;background:#fb8e30;"></div>
<svg style="position:absolute;left:2967px;top:101px;" width="32" height="32" viewBox="0 0 32 32" fill="none"><path d="M11.6 10.8 Q12 5.6 16 5.6 Q21.2 5.6 21.2 10.5 Q21.2 13.4 18.2 15.1 Q16 16.4 16 19 V20.4" stroke="#fff" stroke-width="3.2" stroke-linecap="round" stroke-linejoin="round"/><circle cx="16.2" cy="25.3" r="1.9" fill="#fff"/></svg>
<svg style="position:absolute;left:2963px;top:157px;" width="40" height="40" viewBox="0 0 40 40" fill="none"><g stroke="#1c66c4" stroke-width="2.1" stroke-linecap="round" stroke-linejoin="round" fill="none"><path d="M4.3 16 H12.3 Q14 16.5 13 19 L4.8 32 Q4 35 7 35.1 H17.5 L22 30 L30 19 Q30.8 17.8 31.8 19.5 L35.8 32 Q36.2 34.5 33.5 34 L20 29 Q16 27 17.5 24.5 L21 19.1"/></g><path d="M23 5 Q24 10.5 29 11.6 Q24 12.7 23 18.2 Q22 12.7 17 11.6 Q22 10.5 23 5Z" fill="#2aa14b"/><path d="M28.5 3.3 Q29 6.3 31.8 6.8 Q29 7.3 28.5 10.3 Q28 7.3 25.2 6.8 Q28 6.3 28.5 3.3Z" fill="#e53935"/></svg>
<svg style="position:absolute;left:2963px;top:215px;" width="40" height="40" viewBox="0 0 40 40" fill="none"><g stroke="#5a5d91" stroke-width="2.5" stroke-linejoin="round" stroke-linecap="round" fill="#d3d3e3"><path d="M22 25.4 L20.2 34 Q19.8 35.6 21.6 35.6 Q23 35.6 23.6 34.4 L27.7 25.2"/><path d="M8.2 24 L12.8 7.4 Q13.6 5.6 15.4 6.6 L26.3 14.1 L24.9 24.4 L9.8 26.3 Q7.8 26.5 8.2 24 Z"/><path d="M26.3 14.1 L30.5 15.3 Q31.8 15.8 31.5 17.2 L29.9 24.6 Q29.6 25.7 28.5 25.6 L24.9 24.4 Z"/></g></svg>
<svg style="position:absolute;left:2963px;top:276px;" width="40" height="40" viewBox="0 0 40 40" fill="none"><g stroke="#5a5d91" stroke-width="2.4" stroke-linejoin="round" stroke-linecap="round"><rect x="7" y="4.8" width="26.4" height="20.5" rx="3.5" fill="#d3d3e3"/><path d="M20.2 25.5 V31.5 M14 31.5 H26.4"/><path d="M17 11 L25.5 15.5 L17 20 Z"/></g></svg>
<div style="position:absolute;left:2964px;top:333px;width:38px;height:1.5px;background:#dddde6;"></div>
<svg style="position:absolute;left:2963px;top:355px;" width="40" height="40" viewBox="0 0 40 40" fill="none"><g stroke="#1c66c4" stroke-width="2.2" stroke-linecap="round" stroke-linejoin="round"><path d="M15 27.4 H7 Q3.9 27.4 3.9 24.3 V6.5 Q3.9 3.4 7 3.4 H15.4 M22.5 3.4 H32.7 Q35.8 3.4 35.8 6.5 V24.3 Q35.8 27.4 32.7 27.4 H23.4 L18.6 33.6"/></g><circle cx="13" cy="15.9" r="1.7" fill="#e53935"/><circle cx="20" cy="15.9" r="1.7" fill="#e53935"/><circle cx="27" cy="15.9" r="1.7" fill="#e53935"/></svg>
<div style="position:absolute;left:2964px;top:415px;width:38px;height:1.5px;background:#dddde6;"></div>
<svg style="position:absolute;left:2963px;top:440px;" width="40" height="40" viewBox="0 0 40 40" fill="none"><g stroke-width="2" stroke-linejoin="round"><path d="M5.5 7 L15 6 L16.5 27 L8 28 Z" stroke="#e53935" fill="#fff"/><path d="M14.5 5 L33.5 8 L30.5 28 L12 25 Z" stroke="#1c66c4" fill="#fff"/><rect x="10.5" y="10" width="18.5" height="20.5" rx="1.5" stroke="#f5b400" fill="#fff"/><path d="M15 15 H25 M15 18.5 H25 M15 22 H25 M15 25.5 H21" stroke="#1c66c4"/></g></svg>
<svg style="position:absolute;left:2963px;top:497px;" width="40" height="40" viewBox="0 0 40 40" fill="none"><g stroke="#5a5d91" stroke-width="2.3" stroke-linejoin="round" stroke-linecap="round"><path d="M31.00 18.70 L31.00 18.89 L30.99 19.08 L30.98 19.28 L30.97 19.47 L30.96 19.66 L30.94 19.85 L30.92 20.04 L30.89 20.23 L30.86 20.42 L30.83 20.61 L31.07 20.85 L31.32 21.11 L31.57 21.37 L31.82 21.65 L32.07 21.94 L32.32 22.23 L32.55 22.54 L32.77 22.85 L32.97 23.17 L33.16 23.49 L33.07 23.72 L32.98 23.94 L32.89 24.17 L32.79 24.39 L32.69 24.62 L32.58 24.84 L32.47 25.06 L32.36 25.27 L32.24 25.49 L32.12 25.70 L32.00 25.91 L31.87 26.12 L31.74 26.32 L31.61 26.53 L31.47 26.73 L31.33 26.93 L31.18 27.13 L31.03 27.32 L30.88 27.51 L30.72 27.70 L30.35 27.70 L29.98 27.68 L29.60 27.65 L29.22 27.60 L28.84 27.54 L28.47 27.47 L28.10 27.39 L27.74 27.30 L27.40 27.21 L27.07 27.13 L26.92 27.25 L26.77 27.37 L26.62 27.48 L26.47 27.60 L26.31 27.71 L26.15 27.82 L25.99 27.93 L25.83 28.03 L25.67 28.13 L25.50 28.23 L25.33 28.32 L25.16 28.41 L24.99 28.50 L24.82 28.59 L24.65 28.67 L24.47 28.75 L24.30 28.83 L24.12 28.90 L23.94 28.97 L23.76 29.04 L23.67 29.37 L23.58 29.71 L23.47 30.06 L23.36 30.41 L23.24 30.77 L23.10 31.13 L22.95 31.49 L22.79 31.83 L22.62 32.17 L22.43 32.49 L22.19 32.53 L21.95 32.56 L21.71 32.60 L21.46 32.62 L21.22 32.65 L20.98 32.67 L20.73 32.68 L20.49 32.69 L20.24 32.70 L20.00 32.70 L19.76 32.70 L19.51 32.69 L19.27 32.68 L19.02 32.67 L18.78 32.65 L18.54 32.62 L18.29 32.60 L18.05 32.56 L17.81 32.53 L17.57 32.49 L17.38 32.17 L17.21 31.83 L17.05 31.49 L16.90 31.13 L16.76 30.77 L16.64 30.41 L16.53 30.06 L16.42 29.71 L16.33 29.37 L16.24 29.04 L16.06 28.97 L15.88 28.90 L15.70 28.83 L15.53 28.75 L15.35 28.67 L15.18 28.59 L15.01 28.50 L14.84 28.41 L14.67 28.32 L14.50 28.23 L14.33 28.13 L14.17 28.03 L14.01 27.93 L13.85 27.82 L13.69 27.71 L13.53 27.60 L13.38 27.48 L13.23 27.37 L13.08 27.25 L12.93 27.13 L12.60 27.21 L12.26 27.30 L11.90 27.39 L11.53 27.47 L11.16 27.54 L10.78 27.60 L10.40 27.65 L10.02 27.68 L9.65 27.70 L9.28 27.70 L9.12 27.51 L8.97 27.32 L8.82 27.13 L8.67 26.93 L8.53 26.73 L8.39 26.53 L8.26 26.32 L8.13 26.12 L8.00 25.91 L7.88 25.70 L7.76 25.49 L7.64 25.27 L7.53 25.06 L7.42 24.84 L7.31 24.62 L7.21 24.39 L7.11 24.17 L7.02 23.94 L6.93 23.72 L6.84 23.49 L7.03 23.17 L7.23 22.85 L7.45 22.54 L7.68 22.23 L7.93 21.94 L8.18 21.65 L8.43 21.37 L8.68 21.11 L8.93 20.85 L9.17 20.61 L9.14 20.42 L9.11 20.23 L9.08 20.04 L9.06 19.85 L9.04 19.66 L9.03 19.47 L9.02 19.28 L9.01 19.08 L9.00 18.89 L9.00 18.70 L9.00 18.51 L9.01 18.32 L9.02 18.12 L9.03 17.93 L9.04 17.74 L9.06 17.55 L9.08 17.36 L9.11 17.17 L9.14 16.98 L9.17 16.79 L8.93 16.55 L8.68 16.29 L8.43 16.03 L8.18 15.75 L7.93 15.46 L7.68 15.17 L7.45 14.86 L7.23 14.55 L7.03 14.23 L6.84 13.91 L6.93 13.68 L7.02 13.46 L7.11 13.23 L7.21 13.01 L7.31 12.78 L7.42 12.56 L7.53 12.34 L7.64 12.13 L7.76 11.91 L7.88 11.70 L8.00 11.49 L8.13 11.28 L8.26 11.08 L8.39 10.87 L8.53 10.67 L8.67 10.47 L8.82 10.27 L8.97 10.08 L9.12 9.89 L9.28 9.70 L9.65 9.70 L10.02 9.72 L10.40 9.75 L10.78 9.80 L11.16 9.86 L11.53 9.93 L11.90 10.01 L12.26 10.10 L12.60 10.19 L12.93 10.27 L13.08 10.15 L13.23 10.03 L13.38 9.92 L13.53 9.80 L13.69 9.69 L13.85 9.58 L14.01 9.47 L14.17 9.37 L14.33 9.27 L14.50 9.17 L14.67 9.08 L14.84 8.99 L15.01 8.90 L15.18 8.81 L15.35 8.73 L15.53 8.65 L15.70 8.57 L15.88 8.50 L16.06 8.43 L16.24 8.36 L16.33 8.03 L16.42 7.69 L16.53 7.34 L16.64 6.99 L16.76 6.63 L16.90 6.27 L17.05 5.91 L17.21 5.57 L17.38 5.23 L17.57 4.91 L17.81 4.87 L18.05 4.84 L18.29 4.80 L18.54 4.78 L18.78 4.75 L19.02 4.73 L19.27 4.72 L19.51 4.71 L19.76 4.70 L20.00 4.70 L20.24 4.70 L20.49 4.71 L20.73 4.72 L20.98 4.73 L21.22 4.75 L21.46 4.78 L21.71 4.80 L21.95 4.84 L22.19 4.87 L22.43 4.91 L22.62 5.23 L22.79 5.57 L22.95 5.91 L23.10 6.27 L23.24 6.63 L23.36 6.99 L23.47 7.34 L23.58 7.69 L23.67 8.03 L23.76 8.36 L23.94 8.43 L24.12 8.50 L24.30 8.57 L24.47 8.65 L24.65 8.73 L24.82 8.81 L24.99 8.90 L25.16 8.99 L25.33 9.08 L25.50 9.17 L25.67 9.27 L25.83 9.37 L25.99 9.47 L26.15 9.58 L26.31 9.69 L26.47 9.80 L26.62 9.92 L26.77 10.03 L26.92 10.15 L27.07 10.27 L27.40 10.19 L27.74 10.10 L28.10 10.01 L28.47 9.93 L28.84 9.86 L29.22 9.80 L29.60 9.75 L29.98 9.72 L30.35 9.70 L30.72 9.70 L30.88 9.89 L31.03 10.08 L31.18 10.27 L31.33 10.47 L31.47 10.67 L31.61 10.87 L31.74 11.08 L31.87 11.28 L32.00 11.49 L32.12 11.70 L32.24 11.91 L32.36 12.13 L32.47 12.34 L32.58 12.56 L32.69 12.78 L32.79 13.01 L32.89 13.23 L32.98 13.46 L33.07 13.68 L33.16 13.91 L32.97 14.23 L32.77 14.55 L32.55 14.86 L32.32 15.17 L32.07 15.46 L31.82 15.75 L31.57 16.03 L31.32 16.29 L31.07 16.55 L30.83 16.79 L30.86 16.98 L30.89 17.17 L30.92 17.36 L30.94 17.55 L30.96 17.74 L30.97 17.93 L30.98 18.12 L30.99 18.32 L31.00 18.51 Z" fill="#d3d3e3"/><path d="M14.5 15.5 H26.5 V18.5 Q26.5 24.2 20 24.2 Q13.5 24.2 13.5 18.5 V15.5 Z" fill="#fff"/><path d="M16.8 12.3 V15.5 M23.4 12.3 V15.5 M20 24.2 V33.5"/></g></svg>
<div style="position:absolute;left:356px;top:1338px;width:2664px;height:112px;background:#fff;box-shadow:0 -4px 10px rgba(0,0,0,0.06);"></div>
<div style="position:absolute;left:375px;top:1357px;width:232px;height:74px;border:3px solid #fb2414;box-sizing:border-box;"></div>
<div style="position:absolute;left:383px;top:1366px;width:215px;height:57px;background:#408dfb;border-radius:9px;"></div>
<div class="t" style="left:400.60px;top:1383.00px;font-size:24.5px;color:#fff;font-weight:400;letter-spacing:0.160px;">Initiate Payment</div>
<div style="position:absolute;left:616px;top:1366px;width:113px;height:57px;background:#f3f3f3;border:1.5px solid #dcdcdc;border-radius:9px;box-sizing:border-box;"></div>
<div class="t" style="left:634.60px;top:1383.00px;font-size:24px;color:#000;font-weight:400;letter-spacing:0.200px;">Cancel</div>
<div style="position:absolute;left:2955px;top:1392px;width:58px;height:58px;border-radius:50%;background:#e0dfee;"></div>
<svg style="position:absolute;left:2974px;top:1408px;" width="20" height="26" viewBox="0 0 20 26" fill="none"><path d="M6 5.5 L13 13 L6 20.5" stroke="#2c3150" stroke-width="4" stroke-linecap="round" stroke-linejoin="round"/></svg>
<div style="position:absolute;left:0px;top:1436px;width:3020px;height:14px;background:linear-gradient(180deg, rgba(40,40,80,0) 0%, rgba(40,40,80,0.05) 100%);pointer-events:none;"></div>
</body></html>
